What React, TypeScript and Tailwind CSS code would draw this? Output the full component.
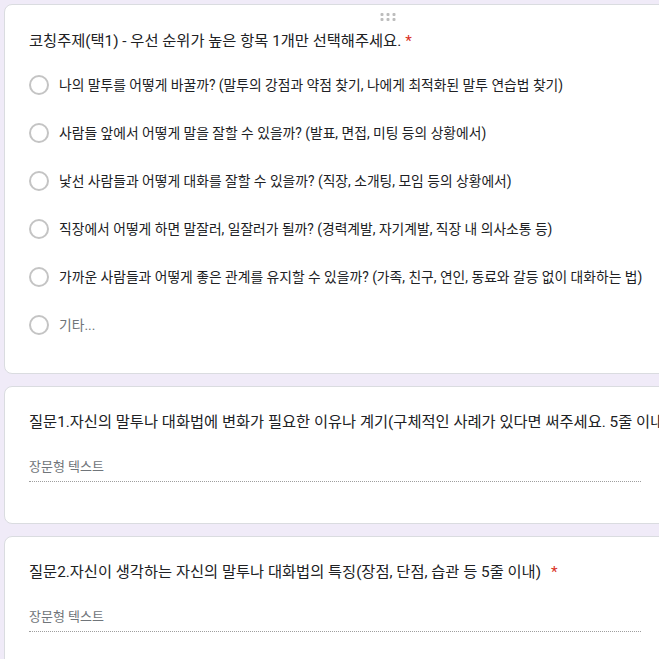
import React from "react";

const options = [
  "나의 말투를 어떻게 바꿀까? (말투의 강점과 약점 찾기, 나에게 최적화된 말투 연습법 찾기)",
  "사람들 앞에서 어떻게 말을 잘할 수 있을까? (발표, 면접, 미팅 등의 상황에서)",
  "낯선 사람들과 어떻게 대화를 잘할 수 있을까? (직장, 소개팅, 모임 등의 상황에서)",
  "직장에서 어떻게 하면 말잘러, 일잘러가 될까? (경력계발, 자기계발, 직장 내 의사소통 등)",
  "가까운 사람들과 어떻게 좋은 관계를 유지할 수 있을까? (가족, 친구, 연인, 동료와 갈등 없이 대화하는 법)",
];

const font = "font-['Roboto','Noto_Sans_CJK_KR',sans-serif]";

const Radio = () => (
  <span className="w-5 h-5 rounded-full border-2 border-[#c4c4c4] shrink-0" />
);

const TextQuestion = ({ title, required }: { title: string; required?: boolean }) => (
  <div className="w-[768px] shrink-0 bg-white rounded-lg border border-[#dadce0] px-6 pt-6 pb-[41px]">
    <div className="text-[15.3px] leading-[22px] text-[#202124] whitespace-nowrap">
      {title}
      {required && <span className="text-[#d93025] ml-2.5">*</span>}
    </div>
    <div className="mt-6 w-[612px] border-b border-dotted border-[#9e9e9e] pb-1">
      <div className="text-[13px] leading-5 text-[#70757a]">장문형 텍스트</div>
    </div>
  </div>
);

export default function App() {
  return (
    <div className={`min-h-screen bg-[#f0ebf8] overflow-hidden pl-1 pt-1 ${font}`}>
      <div className="flex flex-col gap-3 w-[768px]">
        {/* Choice question */}
        <div className="relative w-[768px] bg-white rounded-lg border border-[#dadce0] px-6 pt-6 pb-6">
          <div className="absolute top-[8px] left-1/2 -translate-x-1/2 grid grid-cols-3 gap-x-[3px] gap-y-[2px]">
            {[0, 1, 2, 3, 4, 5].map((i) => (
              <span key={i} className="w-[3px] h-[3px] rounded-[1px] bg-[#bdbdbd]" />
            ))}
          </div>
          <div className="text-[15.3px] leading-6 text-[#202124] whitespace-nowrap">
            코칭주제(택1) - 우선 순위가 높은 항목 1개만 선택해주세요.
            <span className="text-[#d93025] ml-1">*</span>
          </div>
          <div className="mt-2 flex flex-col">
            {options.map((o) => (
              <div key={o} className="h-12 flex items-center gap-2.5">
                <Radio />
                <span className="text-[13.8px] text-[#202124] whitespace-nowrap">{o}</span>
              </div>
            ))}
            <div className="h-12 flex items-center gap-2.5">
              <Radio />
              <span className="text-[13.8px] text-[#70757a]">기타...</span>
            </div>
          </div>
        </div>

        <TextQuestion title="질문1.자신의 말투나 대화법에 변화가 필요한 이유나 계기(구체적인 사례가 있다면 써주세요. 5줄 이내)" required />
        <TextQuestion title="질문2.자신이 생각하는 자신의 말투나 대화법의 특징(장점, 단점, 습관 등 5줄 이내)" required />
      </div>
    </div>
  );
}
